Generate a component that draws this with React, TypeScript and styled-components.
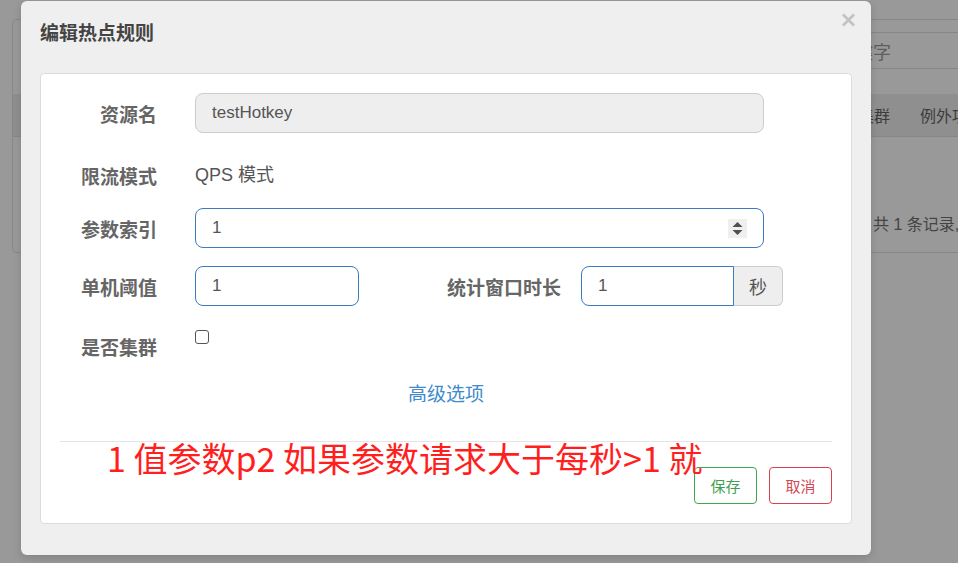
import React from "react";
import styled, { createGlobalStyle } from "styled-components";

const Global = createGlobalStyle`
  html, body { margin: 0; padding: 0; }
  body {
    background: #999999;
    font-family: "Liberation Sans", "Noto Sans CJK SC", sans-serif;
    width: 958px;
    height: 563px;
    overflow: hidden;
  }
  * { box-sizing: border-box; }
`;

const Page = styled.div`
  position: relative;
  width: 958px;
  height: 563px;
  overflow: hidden;
  padding: 19px 0 0 12px;
`;

/* ---------- page behind the backdrop ---------- */
const BackPanel = styled.div`
  width: 1060px;
  height: 234px;
  border: 1px solid #878787;
  border-radius: 5px;
  display: flex;
  flex-direction: column;
  padding-top: 12px;
`;

const SearchRow = styled.div`
  display: flex;
  justify-content: flex-end;
`;

const SearchBox = styled.div`
  width: 246px;
  height: 37px;
  border-top: 1px solid #878787;
  border-bottom: 1px solid #878787;
  padding-left: 12px;
  display: flex;
  align-items: center;
  font-size: 18px;
  color: #5e5e5e;
`;

const HeadBand = styled.div`
  margin-top: 25px;
  height: 43px;
  background: #8f8f8f;
  border-bottom: 1px solid #878787;
  display: flex;
  align-items: center;
  padding-left: 30px;
  font-size: 16px;
  color: #3c3c3c;
`;

const HeadCell = styled.div<{ $w: number }>`
  flex: 0 0 ${(p) => p.$w}px;
  white-space: nowrap;
`;

const TotalRow = styled.div`
  margin-top: 74px;
  padding-left: 860px;
  font-size: 16px;
  color: #444;
  white-space: nowrap;
`;

/* ---------- modal ---------- */
const Modal = styled.div`
  position: absolute;
  left: 21px;
  top: 1px;
  width: 850px;
  height: 554px;
  background: #efefef;
  border-radius: 6px;
  box-shadow: 0 3px 9px rgba(0, 0, 0, 0.15);
  display: flex;
  flex-direction: column;
`;

const Header = styled.div`
  display: flex;
  justify-content: space-between;
  align-items: flex-start;
  padding: 12px 15px 0 19px;
  height: 72px;
`;

const Title = styled.div`
  margin-top: 8px;
  font-size: 19px;
  line-height: 26px;
  font-weight: bold;
  color: #444;
`;

const CloseBtn = styled.button`
  border: 0;
  background: transparent;
  padding: 0;
  width: 15px;
  height: 14px;
  display: flex;
  cursor: pointer;
`;

const Card = styled.div`
  margin: 0 19px;
  background: #fff;
  border: 1px solid #dcdcdc;
  border-radius: 4px;
  padding: 19px 0 19px;
  display: flex;
  flex-direction: column;
`;

const Row = styled.div<{ $mt?: number; $top?: boolean }>`
  display: flex;
  align-items: ${(p) => (p.$top ? "flex-start" : "center")};
  margin-top: ${(p) => p.$mt ?? 0}px;
  min-height: ${(p) => (p.$top ? 34 : 40)}px;
`;

const Label = styled.div<{ $w?: number; $mt?: number }>`
  flex: 0 0 ${(p) => p.$w ?? 116}px;
  text-align: right;
  margin-right: ${(p) => (p.$w ? 20 : 38)}px;
  margin-top: ${(p) => p.$mt ?? 5}px;
  font-size: 19px;
  line-height: 24px;
  font-weight: bold;
  color: #666;
  white-space: nowrap;
`;

const Field = styled.div<{ $w: number; $disabled?: boolean; $focus?: boolean; $group?: boolean }>`
  width: ${(p) => p.$w}px;
  height: 40px;
  display: flex;
  align-items: center;
  padding: 0 16px;
  background: ${(p) => (p.$disabled ? "#eeeeee" : "#fff")};
  border: 1px solid ${(p) => (p.$focus ? "#3a7bbf" : "#cccccc")};
  border-radius: ${(p) => (p.$group ? "8px 0 0 8px" : "8px")};
`;

const FieldInput = styled.input`
  flex: 1;
  min-width: 0;
  border: 0;
  outline: none;
  padding: 0;
  background: transparent;
  font-family: "Liberation Sans", "Noto Sans CJK SC", sans-serif;
  font-size: 17px;
  color: #555;
`;

const StaticText = styled.div`
  font-size: 18px;
  line-height: 40px;
  color: #555;
`;

const Spinner = styled.div`
  width: 19px;
  height: 19px;
  background: #efefef;
  display: flex;
  align-items: center;
  justify-content: center;
`;

const Group = styled.div`
  display: flex;
`;

const Addon = styled.div`
  width: 49px;
  height: 40px;
  background: #eeeeee;
  border: 1px solid #cccccc;
  border-left: 0;
  border-radius: 0 6px 6px 0;
  display: flex;
  align-items: center;
  justify-content: center;
  font-size: 18px;
  color: #555;
`;

const Check = styled.input`
  appearance: none;
  margin: 4px 0 0;
  width: 14px;
  height: 14px;
  border: 1px solid #555;
  border-radius: 3px;
  background: #fff;
`;

const LinkRow = styled.div`
  margin-top: 22px;
  text-align: center;
`;

const Link = styled.a`
  font-size: 19px;
  line-height: 24px;
  color: #428bca;
  text-decoration: none;
  cursor: pointer;
`;

const Footer = styled.div`
  position: relative;
  margin: 34px 19px 0;
  border-top: 1px solid #e5e5e5;
  padding-top: 25px;
  display: flex;
  justify-content: flex-end;
  gap: 12px;
`;

const Btn = styled.button<{ $tone: "ok" | "cancel" }>`
  width: 63px;
  height: 37px;
  background: #fff;
  border: 1px solid ${(p) => (p.$tone === "ok" ? "#3aa84e" : "#d9414f")};
  color: ${(p) => (p.$tone === "ok" ? "#3f9f50" : "#d24a55")};
  border-radius: 4px;
  font-family: "Liberation Sans", "Noto Sans CJK SC", sans-serif;
  font-size: 15px;
  padding: 0;
  cursor: pointer;
`;

const Note = styled.div`
  position: absolute;
  left: 47px;
  top: -4px;
  font-family: "Noto Sans CJK SC", sans-serif;
  font-size: 34px;
  line-height: 40px;
  color: #ff1f1f;
  white-space: nowrap;
  pointer-events: none;
`;

export default function App() {
  return (
    <>
      <Global />
      <Page>
        <BackPanel>
          <SearchRow>
            <SearchBox>关键字</SearchBox>
          </SearchRow>
          <HeadBand>
            <HeadCell $w={783}>资源名</HeadCell>
            <HeadCell $w={94}>是否集群</HeadCell>
            <HeadCell $w={120}>例外项数目</HeadCell>
          </HeadBand>
          <TotalRow>共 1 条记录, 每页 10 条</TotalRow>
        </BackPanel>

        <Modal>
          <Header>
            <Title>编辑热点规则</Title>
            <CloseBtn aria-label="close">
              <svg width="15" height="14" viewBox="0 0 15 14">
                <path d="M2 1.5 L13 12.5 M13 1.5 L2 12.5" stroke="#c3c3c3" strokeWidth="2.8" strokeLinecap="butt" />
              </svg>
            </CloseBtn>
          </Header>
          <Card>
            <Row>
              <Label>资源名</Label>
              <Field $w={569} $disabled>
                <FieldInput defaultValue="testHotkey" disabled />
              </Field>
            </Row>
            <Row $mt={22}>
              <Label>限流模式</Label>
              <StaticText>QPS 模式</StaticText>
            </Row>
            <Row $mt={13}>
              <Label>参数索引</Label>
              <Field $w={569} $focus>
                <FieldInput defaultValue="1" />
                <Spinner>
                  <svg width="11" height="15" viewBox="0 0 11 15">
                    <path d="M5.5 1 L10.5 6 L0.5 6 Z" fill="#505050" />
                    <path d="M0.5 9 L10.5 9 L5.5 14 Z" fill="#505050" />
                  </svg>
                </Spinner>
              </Field>
            </Row>
            <Row $mt={18}>
              <Label>单机阈值</Label>
              <Field $w={164} $focus>
                <FieldInput defaultValue="1" />
              </Field>
              <Label $w={202}>统计窗口时长</Label>
              <Group>
                <Field $w={153} $focus $group>
                  <FieldInput defaultValue="1" />
                </Field>
                <Addon>秒</Addon>
              </Group>
            </Row>
            <Row $mt={20} $top>
              <Label $mt={11}>是否集群</Label>
              <Check type="checkbox" />
            </Row>
            <LinkRow>
              <Link>高级选项</Link>
            </LinkRow>
            <Footer>
              <Note>1 值参数p2 如果参数请求大于每秒&gt;1 就</Note>
              <Btn $tone="ok">保存</Btn>
              <Btn $tone="cancel">取消</Btn>
            </Footer>
          </Card>
        </Modal>
      </Page>
    </>
  );
}
